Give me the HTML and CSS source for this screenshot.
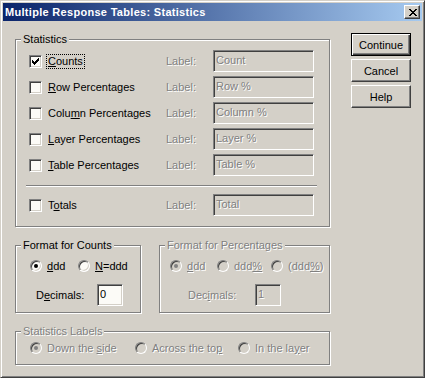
FILE: index.html
```html
<!DOCTYPE html>
<html lang="en">
<head>
  <meta charset="UTF-8">
  <title>Multiple Response Tables: Statistics</title>
  <link rel="stylesheet" href="styles.css">
</head>
<body>
  <div class="window">
    <div class="titlebar">
      <span class="title">Multiple Response Tables: Statistics</span>
      <span class="close">
        <svg width="8" height="7" viewBox="0 0 8 7"><path fill="#000" d="M0 0h2v1h-2zM6 0h2v1h-2zM1 1h2v1h-2zM5 1h2v1h-2zM2 2h4v1h-4zM3 3h2v1h-2zM2 4h4v1h-4zM1 5h2v1h-2zM5 5h2v1h-2zM0 6h2v1h-2zM6 6h2v1h-2z"/></svg>
      </span>
    </div>

    <div class="content">
      <div class="main">
        <!-- Statistics -->
        <div class="group">
          <div class="group-title">Statistics</div>
          <div class="stats-body">
            <div class="stat-rows">
              <div class="stat-row">
                <span class="option">
                  <span class="check"><svg width="7" height="7" viewBox="0 0 7 7"><path fill="#000" d="M6 0h1v1h-1zM5 1h2v1h-2zM0 2h1v1h-1zM4 2h3v1h-3zM0 3h2v1h-2zM3 3h3v1h-3zM0 4h5v1h-5zM1 5h3v1h-3zM2 6h1v1h-1z"/></svg></span>
                  <span class="caption focus"><u>C</u>ounts</span>
                </span>
                <span class="dim">Label:</span>
                <span class="field off">Count</span>
              </div>
              <div class="stat-row">
                <span class="option"><span class="check"></span><span class="caption"><u>R</u>ow Percentages</span></span>
                <span class="dim">Label:</span>
                <span class="field off">Row %</span>
              </div>
              <div class="stat-row">
                <span class="option"><span class="check"></span><span class="caption">Colu<u>m</u>n Percentages</span></span>
                <span class="dim">Label:</span>
                <span class="field off">Column %</span>
              </div>
              <div class="stat-row">
                <span class="option"><span class="check"></span><span class="caption"><u>L</u>ayer Percentages</span></span>
                <span class="dim">Label:</span>
                <span class="field off">Layer %</span>
              </div>
              <div class="stat-row">
                <span class="option"><span class="check"></span><span class="caption"><u>T</u>able Percentages</span></span>
                <span class="dim">Label:</span>
                <span class="field off">Table %</span>
              </div>
            </div>
            <div class="separator"></div>
            <div class="stat-row totals">
              <span class="option"><span class="check"></span><span class="caption">T<u>o</u>tals</span></span>
              <span class="dim">Label:</span>
              <span class="field off">Total</span>
            </div>
          </div>
        </div>

        <div class="format-row">
          <!-- Format for Counts -->
          <div class="group counts">
            <div class="group-title">Format for Counts</div>
            <div class="radio-row">
              <span class="choice w48"><span class="radio on"></span><span><u>d</u>dd</span></span>
              <span class="choice"><span class="radio"></span><span><u>N</u>=ddd</span></span>
            </div>
            <div class="decimals-row">
              <span class="decimals-label w61">D<u>e</u>cimals:</span>
              <span class="field small">0</span>
            </div>
          </div>

          <!-- Format for Percentages -->
          <div class="group pct disabled">
            <div class="group-title">Format for Percentages</div>
            <div class="radio-row">
              <span class="choice w47"><span class="radio on"></span><span><u>d</u>dd</span></span>
              <span class="choice w54"><span class="radio"></span><span>ddd<u>%</u></span></span>
              <span class="choice"><span class="radio"></span><span>(ddd<u>%</u>)</span></span>
            </div>
            <div class="decimals-row">
              <span class="decimals-label w67">Dec<u>i</u>mals:</span>
              <span class="field small off">1</span>
            </div>
          </div>
        </div>

        <!-- Statistics Labels -->
        <div class="group labels disabled">
          <div class="group-title">Statistics Labels</div>
          <div class="radio-row">
            <span class="choice w105"><span class="radio on"></span><span>Down the <u>s</u>ide</span></span>
            <span class="choice w103"><span class="radio"></span><span>Across the to<u>p</u></span></span>
            <span class="choice"><span class="radio"></span><span>In the la<u>y</u>er</span></span>
          </div>
        </div>
      </div>

      <div class="buttons">
        <button class="btn default">Continue</button>
        <button class="btn">Cancel</button>
        <button class="btn">Help</button>
      </div>
    </div>
  </div>
</body>
</html>
```

FILE: styles.css
```css
/* Window frame */
body {
  margin: 0;
  background-color: #d4d0c8;
}

.window {
  width: 425px;
  height: 378px;
  box-sizing: border-box;
  padding: 2px;
  background-color: #d4d0c8;
  border: 1px solid;
  border-color: #d4d0c8 #404040 #404040 #d4d0c8;
  box-shadow: inset 1px 1px #fff, inset -1px -1px #808080;
  font-family: 'Liberation Sans', Arial, sans-serif;
  font-size: 11px;
  color: #000;
}

.titlebar {
  height: 18px;
  display: flex;
  align-items: center;
  justify-content: space-between;
  padding: 0 2px 0 2px;
  background: linear-gradient(to right, #0a246a, #a6caf0);
}

.title {
  color: #fff;
  font-weight: bold;
  font-size: 11px;
  letter-spacing: 0.3px;
}

.close {
  width: 16px;
  height: 14px;
  box-sizing: border-box;
  display: flex;
  align-items: center;
  justify-content: center;
  padding-left: 1px;
  background-color: #d4d0c8;
  border: 1px solid;
  border-color: #fff #404040 #404040 #fff;
  box-shadow: inset -1px -1px #808080;
}

.content {
  display: flex;
  padding: 12px 0 0 12px;
}

.main {
  width: 315px;
  padding-top: 6px;
}

/* Group boxes */
.group {
  border: 1px solid #808080;
  box-shadow: inset 1px 1px #fff, 1px 1px #fff;
}

.group-title {
  display: table;
  margin: -7px 0 0 5px;
  padding: 0 2px;
  line-height: 13px;
  background-color: #d4d0c8;
}

.disabled,
.dim,
.off {
  color: #808080;
  text-shadow: 1px 1px 0 #fff;
}

/* Statistics */
.stats-body {
  padding: 4px 0 10px 13px;
}

.stat-rows {
  display: flex;
  flex-direction: column;
  gap: 4px;
}

.stat-row {
  display: grid;
  grid-template-columns: 137px 47px 101px;
  align-items: center;
  height: 22px;
}

.option {
  display: flex;
  align-items: center;
}

.check {
  width: 13px;
  height: 13px;
  box-sizing: border-box;
  display: flex;
  align-items: center;
  justify-content: center;
  background-color: #fcfbf7;
  border: 1px solid;
  border-color: #808080 #fff #fff #808080;
  box-shadow: inset 1px 1px #404040, inset -1px -1px #d4d0c8;
}

.caption {
  margin-left: 4px;
  padding: 0 1px;
  line-height: 13px;
  border: 1px solid transparent;
}

.caption.focus {
  border: 1px dotted #000;
}

.field {
  height: 22px;
  box-sizing: border-box;
  line-height: 18px;
  padding-left: 2px;
  background-color: #d4d0c8;
  border: 1px solid;
  border-color: #808080 #fff #fff #808080;
  box-shadow: inset 1px 1px #404040, inset -1px -1px #d4d0c8;
}

.separator {
  height: 1px;
  width: 291px;
  margin: 9px 0 0 -3px;
  background-color: #808080;
  border-bottom: 1px solid #fff;
}

.totals {
  margin-top: 7px;
}

/* Format groups */
.format-row {
  display: flex;
  gap: 18px;
  margin-top: 18px;
}

.counts {
  width: 126px;
  box-sizing: border-box;
  padding-bottom: 6px;
}

.pct {
  width: 171px;
  box-sizing: border-box;
  padding-bottom: 6px;
}

.radio-row {
  display: flex;
  align-items: center;
  height: 14px;
  margin-top: 7px;
  padding-left: 14px;
}

.pct .radio-row {
  padding-left: 10px;
}

.choice {
  display: flex;
  align-items: center;
  white-space: pre;
}

.w47 { width: 47px; }
.w48 { width: 48px; }
.w54 { width: 54px; }
.w103 { width: 103px; }
.w105 { width: 105px; }
.w61 { width: 61px; }
.w67 { width: 67px; }

.radio {
  position: relative;
  width: 12px;
  height: 12px;
  box-sizing: border-box;
  margin-right: 5px;
  border-radius: 50%;
  background-color: #fcfbf7;
  border: 1px solid;
  border-color: #808080 #fff #fff #808080;
  box-shadow: inset 1px 1px #404040, inset -1px -1px #d4d0c8;
}

.disabled .radio {
  background-color: #d4d0c8;
}

.radio.on::after {
  content: '';
  position: absolute;
  left: 3px;
  top: 3px;
  width: 4px;
  height: 4px;
  border-radius: 50%;
  background-color: #000;
}

.disabled .radio.on::after {
  background-color: #808080;
}

.decimals-row {
  display: flex;
  align-items: center;
  margin-top: 11px;
  padding-left: 20px;
}

.pct .decimals-row {
  padding-left: 28px;
}

.field.small {
  width: 26px;
  background-color: #fcfbf7;
}

.field.small.off {
  background-color: #d4d0c8;
}

/* Statistics Labels */
.labels {
  margin-top: 18px;
  padding-bottom: 9px;
}

.labels .radio-row {
  margin-top: 3px;
}

/* Buttons */
.buttons {
  display: flex;
  flex-direction: column;
  gap: 3px;
  margin-left: 21px;
}

.btn {
  width: 60px;
  height: 23px;
  padding: 0;
  font-family: 'Liberation Sans', Arial, sans-serif;
  font-size: 11px;
  color: #000;
  background-color: #d4d0c8;
  border: 1px solid;
  border-color: #fff #404040 #404040 #fff;
  box-shadow: inset -1px -1px #808080;
}

.btn.default {
  border-color: #000;
  box-shadow: inset 1px 1px #fff, inset -1px -1px #404040, inset -2px -2px #808080;
}
```
